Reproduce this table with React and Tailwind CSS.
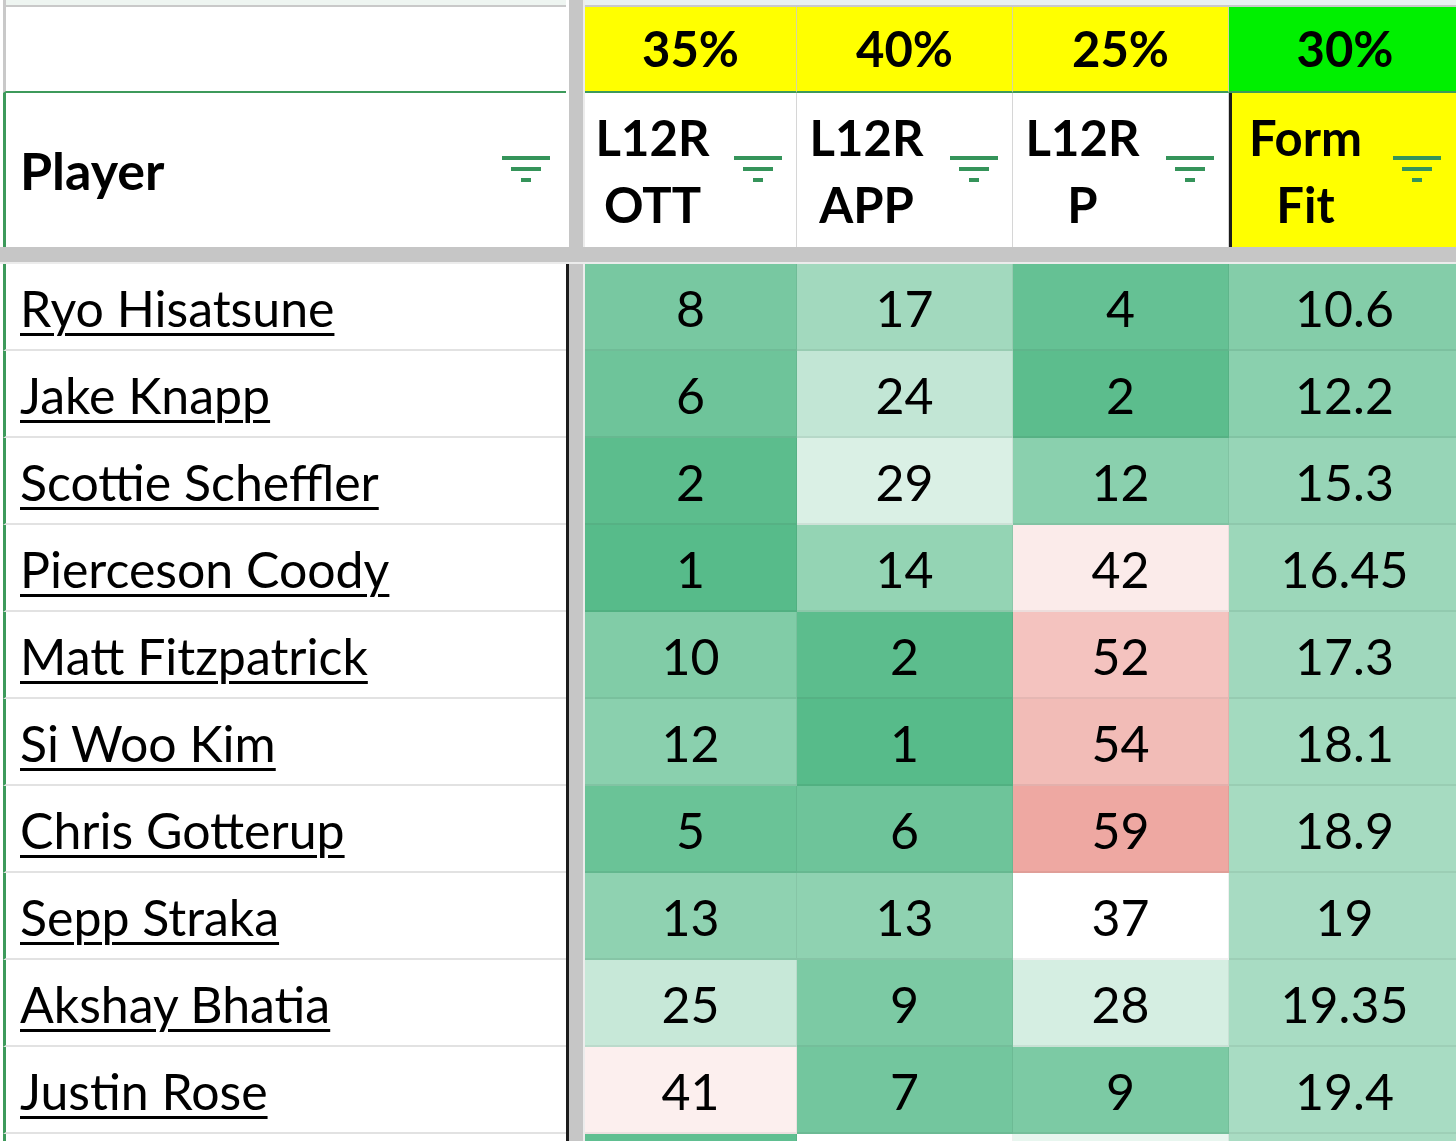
const GREEN = [87, 187, 138]
const WHITE = [255, 255, 255]
const RED = [230, 124, 115]

function mix(a, b, t) {
  const c = a.map((x, i) => Math.round(x + (b[i] - x) * t))
  return `rgb(${c[0]}, ${c[1]}, ${c[2]})`
}

// Sheets-style 3 point colour scale
function scale(v, lo, mid, hi) {
  if (v <= mid) {
    const t = Math.min(1, (mid - v) / (mid - lo))
    return mix(WHITE, GREEN, t)
  }
  const t = Math.min(1, (v - mid) / (hi - mid))
  return mix(WHITE, RED, t)
}

const rows = [
  { name: 'Ryo Hisatsune', ott: 8, app: 17, p: 4, fit: '10.6' },
  { name: 'Jake Knapp', ott: 6, app: 24, p: 2, fit: '12.2' },
  { name: 'Scottie Scheffler', ott: 2, app: 29, p: 12, fit: '15.3' },
  { name: 'Pierceson Coody', ott: 1, app: 14, p: 42, fit: '16.45' },
  { name: 'Matt Fitzpatrick', ott: 10, app: 2, p: 52, fit: '17.3' },
  { name: 'Si Woo Kim', ott: 12, app: 1, p: 54, fit: '18.1' },
  { name: 'Chris Gotterup', ott: 5, app: 6, p: 59, fit: '18.9' },
  { name: 'Sepp Straka', ott: 13, app: 13, p: 37, fit: '19' },
  { name: 'Akshay Bhatia', ott: 25, app: 9, p: 28, fit: '19.35' },
  { name: 'Justin Rose', ott: 41, app: 7, p: 9, fit: '19.4' },
]

// next row only peeks in at the bottom edge, colours only
const peek = { ott: 3, app: 37, p: 32, fit: 19.6 }

function FilterIcon() {
  return (
    <svg width="48" height="28" viewBox="0 0 48 28" className="shrink-0">
      <rect x="0" y="0" width="48" height="4" fill="#35945a" />
      <rect x="9" y="11" width="30" height="4" fill="#35945a" />
      <rect x="19" y="22" width="10" height="4" fill="#35945a" />
    </svg>
  )
}

function Divider({ black }) {
  return (
    <>
      <div className={`w-[3px] shrink-0 ${black ? 'bg-[#1c1c1c]' : 'bg-white'}`} />
      <div className="w-[14px] shrink-0 bg-[#c6c6c6]" />
      <div className="w-[2px] shrink-0 bg-[#ececec]" />
    </>
  )
}

function HeadCell({ top, bottom, className = '' }) {
  return (
    <div className={`flex items-center border-r border-[#d6d6d6] pr-[14px] ${className}`}>
      <div className="mr-[14px] flex flex-1 flex-col items-center pt-[2px] text-[49px] font-bold leading-[67px]">
        <span>{top}</span>
        <span>{bottom}</span>
      </div>
      <FilterIcon />
    </div>
  )
}

function NumCell({ value, bg, className = '' }) {
  return (
    <div
      className={`flex items-center justify-center border-r border-b-2 border-black/[0.06] pt-[4px] ${className}`}
      style={{ backgroundColor: bg }}
    >
      {value}
    </div>
  )
}

export default function App() {
  return (
    <div className="h-[1141px] w-[1456px] overflow-hidden bg-white font-['Lato',sans-serif] text-[50px] text-black">
      {/* strip above first row */}
      <div className="flex h-[7px]">
        <div className="ml-[3px] w-[563px] shrink-0 border-b-2 border-l-[3px] border-[#c9c9c9] bg-[#eef5f1]" />
        <Divider />
        <div className="flex-1 border-b-2 border-[#c9c9c9] bg-[#e9f1f0]" />
      </div>

      {/* weights */}
      <div className="flex h-[86px] text-[49px]">
        <div className="ml-[3px] w-[563px] shrink-0 border-b-2 border-l-[3px] border-b-[#3d9a5b] border-l-[#c9c9c9]" />
        <Divider />
        <div className="flex w-[212px] shrink-0 items-center justify-center border-r border-b-2 border-r-[#d6d6a0] border-b-[#3d9a5b] bg-[#ffff00] font-bold">35%</div>
        <div className="flex w-[216px] shrink-0 items-center justify-center border-r border-b-2 border-r-[#d6d6a0] border-b-[#3d9a5b] bg-[#ffff00] font-bold">40%</div>
        <div className="flex w-[216px] shrink-0 items-center justify-center border-r border-b-2 border-r-[#d6d6a0] border-b-[#3d9a5b] bg-[#ffff00] font-bold">25%</div>
        <div className="flex w-[232px] shrink-0 items-center justify-center border-b-2 border-b-[#3d9a5b] bg-[#00f000] font-bold">30%</div>
      </div>

      {/* column headers */}
      <div className="flex h-[154px]">
        <div className="ml-[3px] flex w-[563px] shrink-0 items-center justify-between border-l-[3px] border-[#3d9a5b] pr-[16px] pl-[14px] font-bold">
          <span className="text-[52px]">Player</span>
          <FilterIcon />
        </div>
        <Divider />
        <HeadCell top="L12R" bottom="OTT" className="w-[212px] shrink-0" />
        <HeadCell top="L12R" bottom="APP" className="w-[216px] shrink-0" />
        <HeadCell top="L12R" bottom="P" className="w-[216px] shrink-0" />
        <HeadCell top="Form" bottom="Fit" className="w-[232px] shrink-0 border-l-[3px] border-l-[#1c1c1c] bg-[#ffff00] pr-[19px]" />
      </div>

      {/* frozen pane bar */}
      <div className="h-[15px] bg-[#c6c6c6]" />
      <div className="h-[2px] bg-[#ececec]" />

      {rows.map((r, i) => (
        <div key={i} className="flex h-[87px]">
          <div className="ml-[3px] flex w-[563px] shrink-0 items-center border-b-2 border-l-[3px] border-b-[#e2e2e2] border-l-[#3d9a5b] pt-[4px] pl-[14px]">
            <span className="underline decoration-[3px] underline-offset-[6px]">{r.name}</span>
          </div>
          <Divider black />
          <NumCell value={r.ott} bg={scale(r.ott, 1, 37, 70)} className="w-[212px] shrink-0" />
          <NumCell value={r.app} bg={scale(r.app, 1, 37, 70)} className="w-[216px] shrink-0" />
          <NumCell value={r.p} bg={scale(r.p, 1, 37, 70)} className="w-[216px] shrink-0" />
          <NumCell value={r.fit} bg={scale(parseFloat(r.fit), 0, 40, 80)} className="w-[232px] shrink-0" />
        </div>
      ))}

      <div className="flex h-[87px]">
        <div className="ml-[3px] w-[563px] shrink-0 border-l-[3px] border-l-[#3d9a5b]" />
        <Divider black />
        <NumCell bg={scale(peek.ott, 1, 37, 70)} className="w-[212px] shrink-0" />
        <NumCell bg={scale(peek.app, 1, 37, 70)} className="w-[216px] shrink-0" />
        <NumCell bg={scale(peek.p, 1, 37, 70)} className="w-[216px] shrink-0" />
        <NumCell bg={scale(peek.fit, 0, 40, 80)} className="w-[232px] shrink-0" />
      </div>
    </div>
  )
}
